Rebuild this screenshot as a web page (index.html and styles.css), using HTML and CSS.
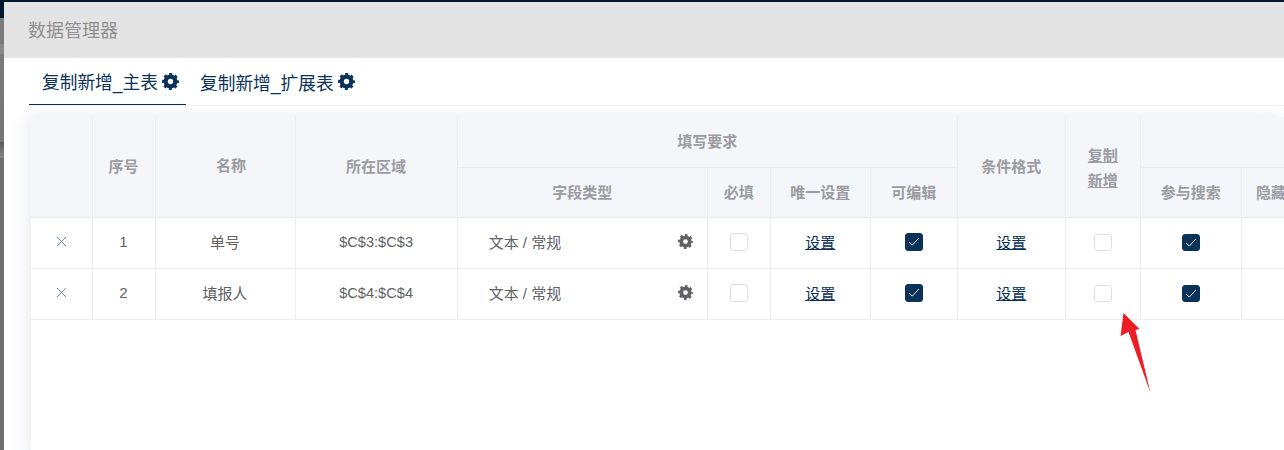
FILE: index.html
```html
<!DOCTYPE html>
<html lang="zh">
<head>
<meta charset="utf-8">
<title>数据管理器</title>
<link rel="stylesheet" href="styles.css">
</head>
<body>
<svg width="0" height="0" class="defs" aria-hidden="true">
  <symbol id="gear" viewBox="0 0 24 24">
    <circle class="gear-ring" cx="12" cy="12" r="6.800"/>
    <circle class="gear-teeth" cx="12" cy="12" r="9.800"/>
  </symbol>
</svg>
<div class="backdrop"></div>
<main class="dialog">
  <header class="dialog-head">数据管理器</header>
  <nav class="tabs">
    <div class="tab active">复制新增_主表<svg class="tab-gear"><use href="#gear"/></svg></div>
    <div class="tab">复制新增_扩展表<svg class="tab-gear"><use href="#gear"/></svg></div>
  </nav>
  <section class="card">
    <table class="grid">
      <colgroup>
        <col class="c1"><col class="c2"><col class="c3"><col class="c4"><col class="c5"><col class="c6"><col class="c7"><col class="c8"><col class="c9"><col class="c10"><col class="c11"><col class="c12">
      </colgroup>
      <thead>
        <tr class="h1">
          <th rowspan="2"></th>
          <th rowspan="2">序号</th>
          <th rowspan="2" class="name-head">名称</th>
          <th rowspan="2">所在区域</th>
          <th colspan="4">填写要求</th>
          <th rowspan="2">条件格式</th>
          <th rowspan="2"><span class="copy-head">复制<br>新增</span></th>
          <th colspan="2"></th>
        </tr>
        <tr class="h2">
          <th>字段类型</th>
          <th>必填</th>
          <th>唯一设置</th>
          <th>可编辑</th>
          <th>参与搜索</th>
          <th class="left-head">隐藏</th>
        </tr>
      </thead>
      <tbody>
        <tr>
          <td><svg class="del" viewBox="0 0 12 12"><path d="M1 1l10 10M11 1L1 11"/></svg></td>
          <td>1</td>
          <td>单号</td>
          <td class="range">$C$3:$C$3</td>
          <td><div class="ftype"><span>文本 / 常规</span><svg class="cell-gear"><use href="#gear"/></svg></div></td>
          <td><span class="box"></span></td>
          <td><a class="link">设置</a></td>
          <td><span class="box on"><svg viewBox="0 0 18 18"><path d="M3.500 9l3.500 3.500 7.500-8"/></svg></span></td>
          <td><a class="link">设置</a></td>
          <td><span class="box small"></span></td>
          <td><span class="box on small"><svg viewBox="0 0 18 18"><path d="M3.500 9l3.500 3.500 7.500-8"/></svg></span></td>
          <td></td>
        </tr>
        <tr>
          <td><svg class="del" viewBox="0 0 12 12"><path d="M1 1l10 10M11 1L1 11"/></svg></td>
          <td>2</td>
          <td>填报人</td>
          <td class="range">$C$4:$C$4</td>
          <td><div class="ftype"><span>文本 / 常规</span><svg class="cell-gear"><use href="#gear"/></svg></div></td>
          <td><span class="box"></span></td>
          <td><a class="link">设置</a></td>
          <td><span class="box on"><svg viewBox="0 0 18 18"><path d="M3.500 9l3.500 3.500 7.500-8"/></svg></span></td>
          <td><a class="link">设置</a></td>
          <td><span class="box small"></span></td>
          <td><span class="box on small"><svg viewBox="0 0 18 18"><path d="M3.500 9l3.500 3.500 7.500-8"/></svg></span></td>
          <td></td>
        </tr>
      </tbody>
    </table>
  </section>
</main>
<svg class="arrow" viewBox="0 0 40 90" aria-hidden="true"><path d="M3.500 3L19.500 19 15.500 20 30.500 83 8.500 22 0.500 26z"/></svg>
</body>
</html>
```
FILE: styles.css
```css
* { box-sizing: border-box; }
html, body {
  margin: 0;
  height: 450px;
  overflow: hidden;
}
body {
  position: relative;
  background: #6f6f6f;
  font-family: "Liberation Sans", "Noto Sans CJK SC", sans-serif;
  font-size: 15px;
  color: #606266;
  padding: 2px 0 0 4px;
}
body::before {
  content: "";
  position: absolute;
  left: 0;
  right: 0;
  top: 0;
  height: 2px;
  background: #02162e;
}
.defs { position: absolute; }
.gear-ring {
  fill: none;
  stroke: currentColor;
  stroke-width: 6;
}
.gear-teeth {
  fill: none;
  stroke: currentColor;
  stroke-width: 4.400;
  stroke-dasharray: 4 3.700;
  stroke-dashoffset: 2;
}
.backdrop {
  position: absolute;
  left: 0;
  top: 0;
  width: 4px;
  height: 450px;
  background: linear-gradient(to bottom,
    #02162e 0, #02162e 18px,
    #7b7b7b 18px, #7b7b7b 44px,
    #8a8a8a 44px, #8a8a8a 54px,
    #7b7b7b 54px, #767676 142px,
    #55585e 142px, #8b8b8b 158px,
    #6f6f6f 158px, #6f6f6f 450px);
}
.dialog {
  position: relative;
  width: 1280px;
  height: 448px;
  background: #fff;
  overflow: hidden;
}
.dialog-head {
  height: 56px;
  background: #e4e4e4;
  color: #8f8f8f;
  font-size: 18px;
  line-height: 58px;
  padding-left: 24px;
}
.tabs {
  display: flex;
  height: 48px;
  margin-left: 25px;
  border-bottom: 1px solid #f1f2f5;
}
.tab {
  display: flex;
  align-items: center;
  height: 47px;
  padding: 0 13px;
  margin-right: 1px;
  font-size: 17.700px;
  white-space: nowrap;
  color: #0b3258;
}
.tab.active {
  width: 157px;
  padding-right: 0;
  border-bottom: 1px solid #0b3258;
}
.tab-gear {
  width: 17px;
  height: 17px;
  margin-left: 4px;
  color: #0b3258;
  flex: none;
}
.card {
  margin: 11px 0 0 27px;
  height: 340px;
  background: #fff;
  box-shadow: -8px 0 14px rgba(200, 205, 215, 0.22), 0 -4px 8px rgba(200, 205, 215, 0.16);
  overflow: hidden;
}
.grid {
  table-layout: fixed;
  border-collapse: collapse;
  width: 1300px;
  text-align: center;
}
.c1 { width: 61px; }
.c2 { width: 63px; }
.c3 { width: 140px; }
.c4 { width: 162px; }
.c5 { width: 250px; }
.c6 { width: 63px; }
.c7 { width: 100px; }
.c8 { width: 87px; }
.c9 { width: 108px; }
.c10 { width: 75px; }
.c11 { width: 101px; }
.c12 { width: 89px; }
.grid th, .grid td {
  border: 1px solid #ebedf2;
  padding: 0;
}
.grid tr > :first-child { border-left: 0; }
.grid thead tr:first-child th { border-top: 0; }
.grid th {
  background: #f5f6fa;
  color: #9a9ca1;
  font-size: 15px;
  font-weight: 700;
}
.h1 { height: 50px; }
.h1 th { padding-bottom: 3px; }
.h2 { height: 50px; }
.h2 th { padding-bottom: 2px; }
.grid .name-head { padding: 0 0 5px 12px; }
.grid tbody tr { height: 51px; }
.grid td { font-size: 15px; color: #606266; padding-bottom: 2px; }
.grid .range { font-size: 14.600px; }
.grid .left-head { text-align: left; padding-left: 14px; }
.copy-head {
  display: block;
  line-height: 25px;
  text-decoration: underline;
  padding-top: 6px;
}
.del {
  display: block;
  margin: 0 auto;
  width: 11px;
  height: 11px;
  fill: none;
  stroke: #5a7fa5;
  stroke-width: 1;
}
.ftype {
  display: flex;
  justify-content: space-between;
  align-items: center;
  padding: 0 14px 0 31px;
}
.cell-gear {
  width: 15px;
  height: 15px;
  color: #606266;
  flex: none;
}
.box {
  display: block;
  width: 18px;
  height: 18px;
  margin: 0 auto;
  background: #fff;
  border: 1px solid #dcdfe6;
  border-radius: 3px;
}
.box.small { height: 17px; margin-top: 1px; }
.box.on {
  background: #0b3258;
  border-color: #0b3258;
}
.box svg {
  display: block;
  width: 16px;
  height: 16px;
  fill: none;
  stroke: #fff;
  stroke-width: 1;
}
.link {
  color: #0b3258;
  text-decoration: underline;
}
.arrow {
  position: absolute;
  left: 1119.500px;
  top: 310px;
  width: 40px;
  height: 90px;
  fill: #ee1c25;
}
```
